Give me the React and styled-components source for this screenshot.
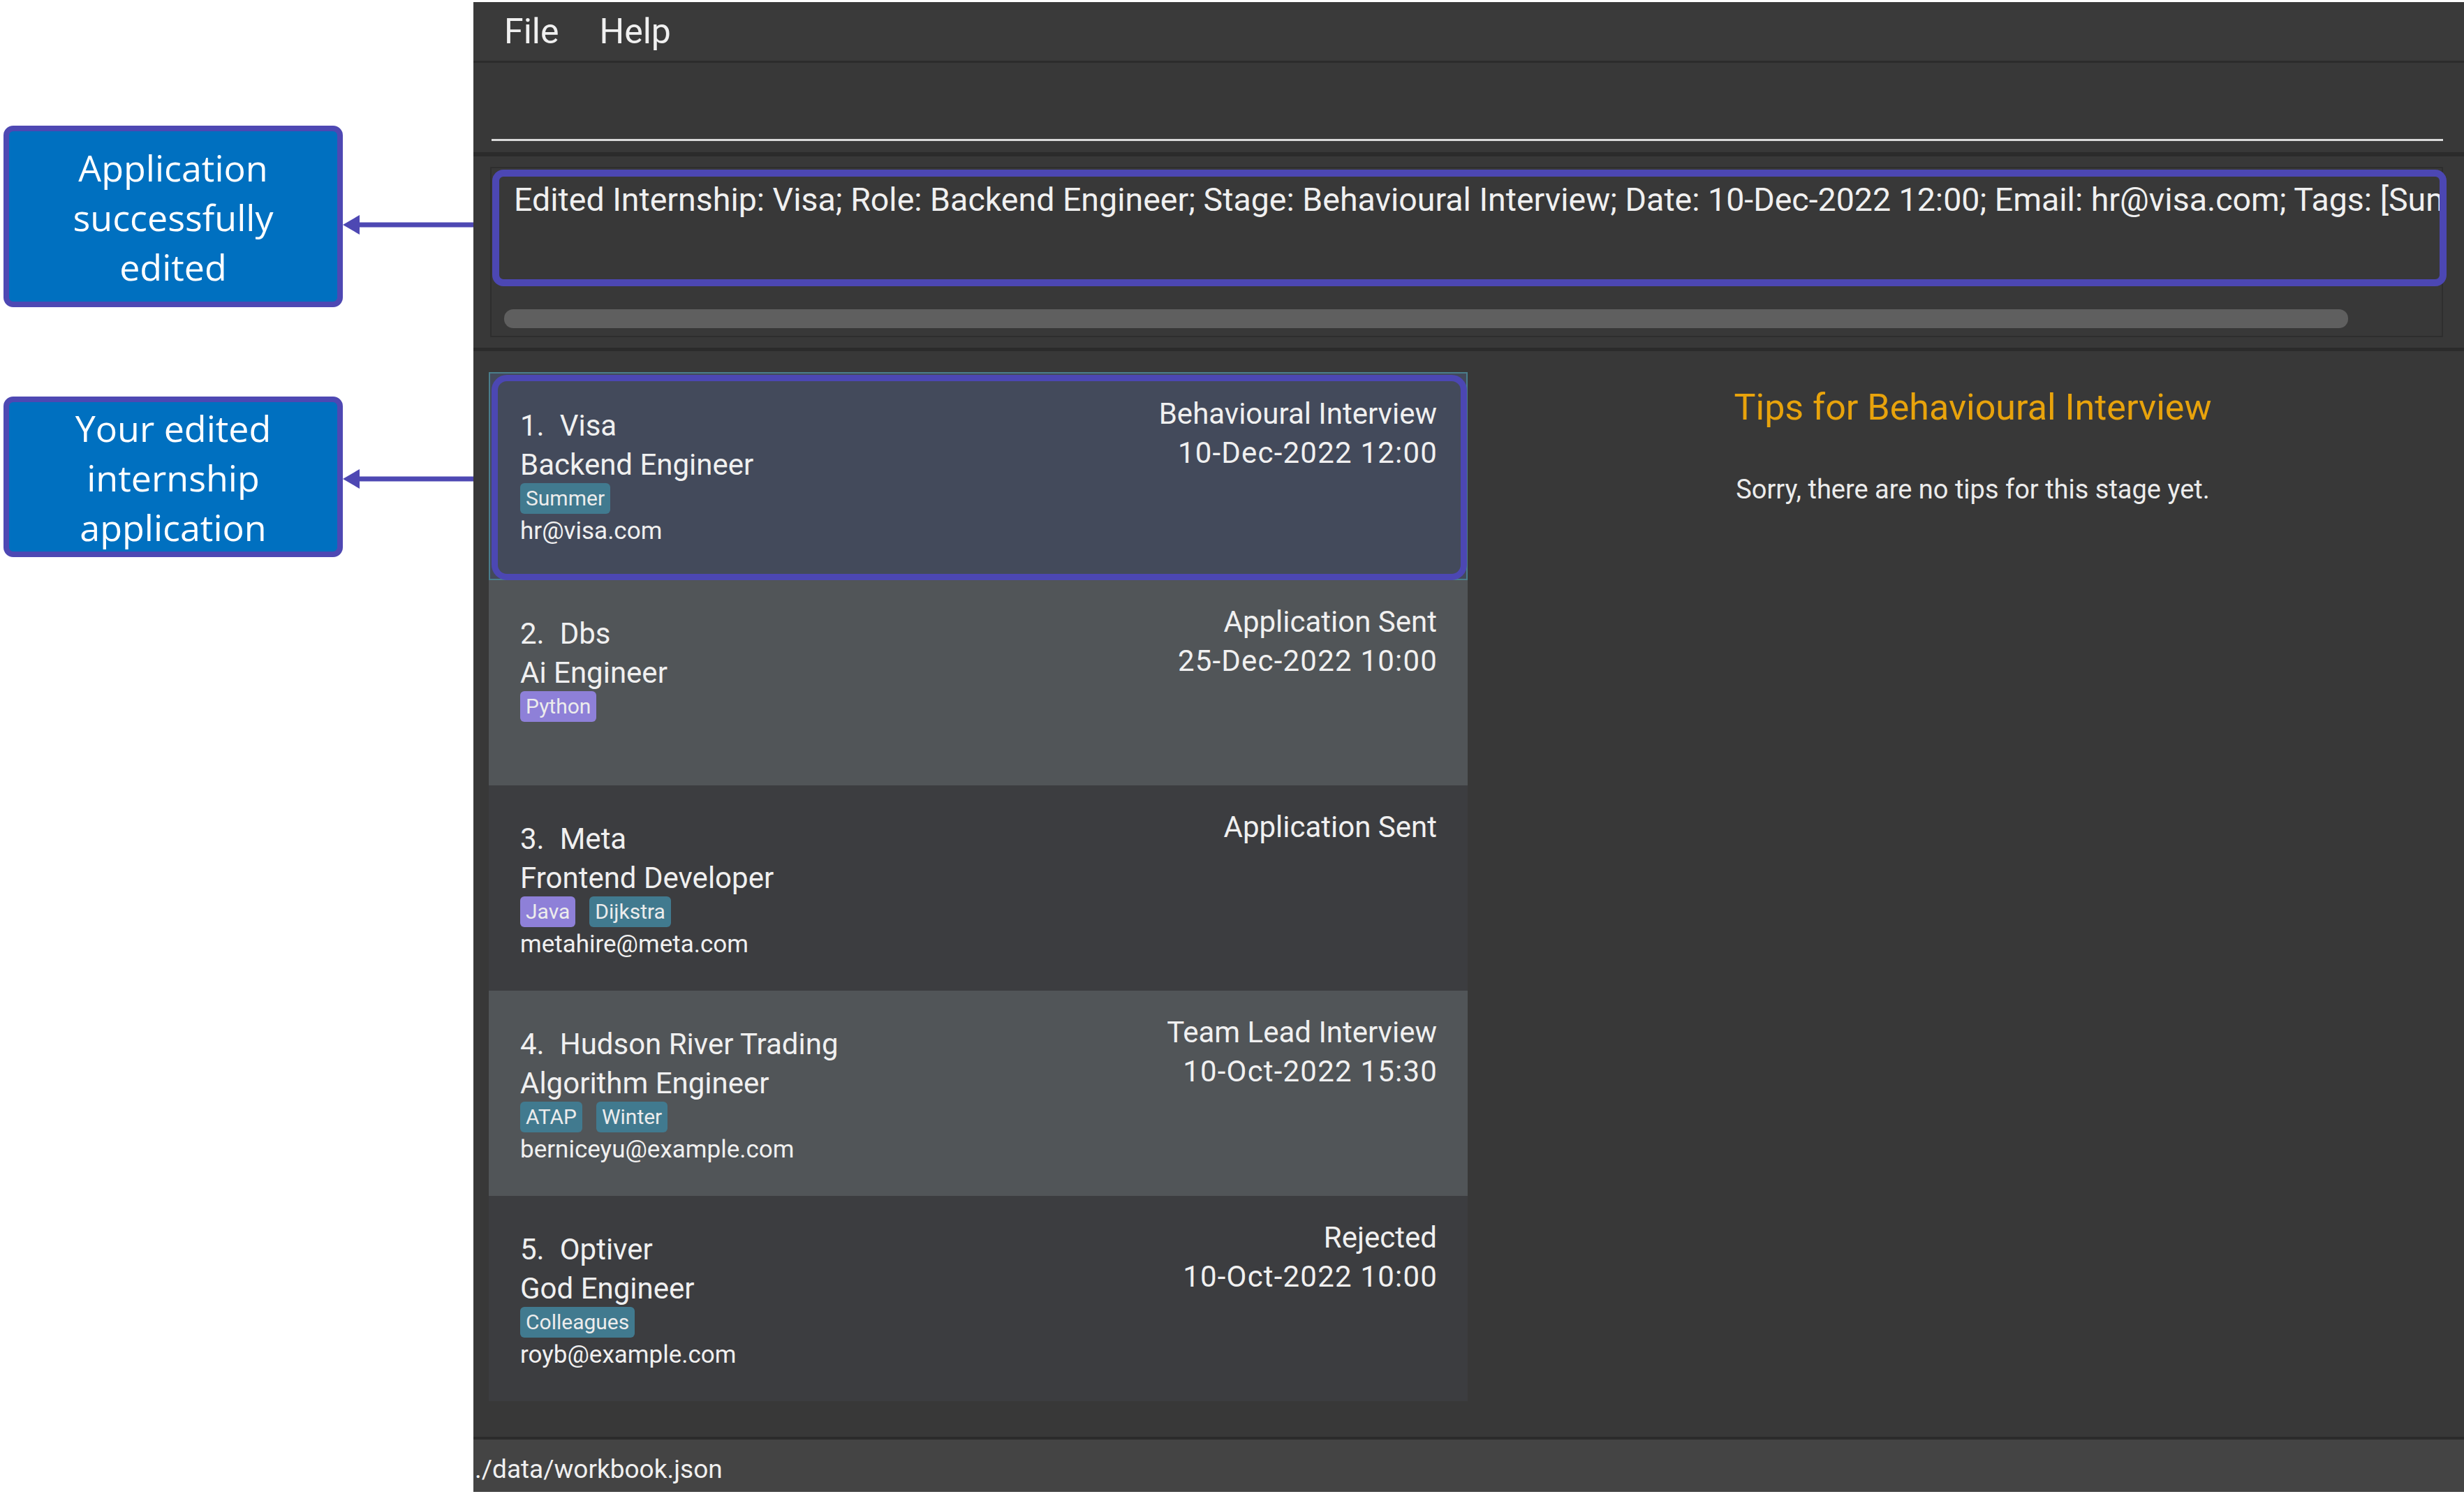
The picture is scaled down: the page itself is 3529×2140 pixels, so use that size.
import React from 'react'
import styled, { createGlobalStyle } from 'styled-components'

const GlobalStyle = createGlobalStyle`
  html, body {
    margin: 0;
    padding: 0;
    background: #ffffff;
  }
  * {
    box-sizing: border-box;
  }
`

const Page = styled.div`
  display: flex;
  width: 3529px;
  height: 2140px;
  background: #ffffff;
  overflow: hidden;
`

const Notes = styled.div`
  width: 678px;
  flex-shrink: 0;
  display: flex;
  flex-direction: column;
  padding: 180px 0 0 5px;
`

const NoteRow = styled.div`
  display: flex;
  align-items: flex-start;
  height: ${(p) => p.$height}px;
  margin-top: ${(p) => p.$gap || 0}px;
`

const NoteBox = styled.div`
  width: 486px;
  height: 100%;
  flex-shrink: 0;
  display: flex;
  align-items: center;
  justify-content: center;
  background: #0070c0;
  border: 8px solid #4e48b3;
  border-radius: 14px;
  color: #ffffff;
  font-family: 'Open Sans', 'Noto Sans', sans-serif;
  font-size: 52px;
  line-height: 71px;
  text-align: center;
`

const ArrowSvg = styled.svg`
  flex: 1;
  height: 30px;
  margin-top: ${(p) => p.$offset}px;
`

const Arrow = ({ offset }) => (
  <ArrowSvg $offset={offset} viewBox="0 0 187 30" preserveAspectRatio="none">
    <line x1="20" y1="15" x2="187" y2="15" stroke="#4e48b3" strokeWidth="7" />
    <polygon points="0,15 24,1 24,29" fill="#4e48b3" />
  </ArrowSvg>
)

const Window = styled.div`
  flex: 1;
  min-width: 0;
  margin: 3px 0;
  display: flex;
  flex-direction: column;
  background: #383838;
  font-family: Roboto, 'Liberation Sans', sans-serif;
  color: #f0f0f0;
`

const MenuBar = styled.div`
  height: 87px;
  display: flex;
  gap: 58px;
  padding-left: 44px;
  background: #3a3a3a;
  border-bottom: 3px solid #2c2c2c;
  font-size: 50px;
  line-height: 84px;
`

const CommandArea = styled.div`
  height: 128px;
  padding: 0 30px 0 26px;
  background: #383838;
`

const CommandField = styled.div`
  height: 112px;
  border-bottom: 3px solid #d9d9d9;
`

const Divider = styled.div`
  height: ${(p) => p.$h}px;
  background: #2b2b2b;
  flex-shrink: 0;
`

const ResultArea = styled.div`
  height: 274px;
  min-width: 0;
  padding: 15px 30px 15px 24px;
  background: #383838;
`

const ResultBox = styled.div`
  height: 100%;
  min-width: 0;
  border: 2px solid #2e2e2e;
  padding: 2px 0 0 1px;
  display: flex;
  flex-direction: column;
`

const ResultText = styled.div`
  height: 167px;
  margin-right: -7px;
  border: 10px solid #4c47b3;
  border-radius: 16px;
  padding: 6px 0 0 21px;
  overflow: hidden;
  white-space: nowrap;
  font-size: 46.5px;
  line-height: 1.2;
`

const Scrollbar = styled.div`
  margin: 33px 0 0 17px;
  width: 2641px;
  height: 27px;
  border-radius: 13px;
  background: #5f5f5f;
`

const Main = styled.div`
  flex: 1;
  display: flex;
  background: #383838;
`

const List = styled.div`
  width: 1424px;
  flex-shrink: 0;
  padding: 30px 0 0 22px;
  display: flex;
  flex-direction: column;
`

const Card = styled.div`
  position: relative;
  height: ${(p) => (p.$selected ? 298 : 294)}px;
  display: flex;
  justify-content: space-between;
  padding: 0 44px 0 45px;
  background: ${(p) => (p.$selected ? '#434a5b' : p.$alt ? '#515558' : '#3c3d40')};
  box-shadow: ${(p) => (p.$selected ? 'inset 0 0 0 2px #4a7d8c' : 'none')};

  &::after {
    content: '';
    display: ${(p) => (p.$selected ? 'block' : 'none')};
    position: absolute;
    inset: 4px 1px 0 4px;
    border: 9px solid #4c47b3;
    border-radius: 22px;
    pointer-events: none;
  }
`

const Left = styled.div`
  padding-top: 49px;
  display: flex;
  flex-direction: column;
`

const Right = styled.div`
  padding-top: 32px;
  text-align: right;
  font-size: 42px;
  line-height: 56px;
`

const DateLine = styled.div`
  letter-spacing: 1.2px;
  margin-right: -1px;
`

const Line = styled.div`
  font-size: 42px;
  line-height: 56px;
  white-space: nowrap;
`

const Index = styled.span`
  margin-right: 22px;
`

const Tags = styled.div`
  display: flex;
  gap: 20px;
  margin-top: -2px;
`

const Tag = styled.span`
  height: 44px;
  padding: 0 8px;
  border-radius: 6px;
  background: ${(p) => (p.$purple ? '#8e80d8' : '#417a8f')};
  color: #ececec;
  font-size: 30px;
  line-height: 44px;
`

const Email = styled.div`
  margin-top: 3px;
  font-size: 35px;
  line-height: 44px;
`

const Tips = styled.div`
  flex: 1;
  padding: 50px 0 0 20px;
  display: flex;
  flex-direction: column;
  align-items: center;
`

const TipsTitle = styled.div`
  font-size: 52px;
  line-height: 1.2;
  color: #e8a30c;
`

const TipsBody = styled.div`
  margin-top: 64px;
  font-size: 38px;
  line-height: 1.2;
  color: #ececec;
`

const StatusBar = styled.div`
  height: 75px;
  padding: 22px 0 0 2px;
  background: #444444;
  font-size: 37px;
  line-height: 42px;
`

const internships = [
  {
    company: 'Visa',
    role: 'Backend Engineer',
    tags: [{ name: 'Summer' }],
    email: 'hr@visa.com',
    stage: 'Behavioural Interview',
    date: '10-Dec-2022 12:00',
  },
  {
    company: 'Dbs',
    role: 'Ai Engineer',
    tags: [{ name: 'Python', purple: true }],
    stage: 'Application Sent',
    date: '25-Dec-2022 10:00',
  },
  {
    company: 'Meta',
    role: 'Frontend Developer',
    tags: [{ name: 'Java', purple: true }, { name: 'Dijkstra' }],
    email: 'metahire@meta.com',
    stage: 'Application Sent',
  },
  {
    company: 'Hudson River Trading',
    role: 'Algorithm Engineer',
    tags: [{ name: 'ATAP' }, { name: 'Winter' }],
    email: 'berniceyu@example.com',
    stage: 'Team Lead Interview',
    date: '10-Oct-2022 15:30',
  },
  {
    company: 'Optiver',
    role: 'God Engineer',
    tags: [{ name: 'Colleagues' }],
    email: 'royb@example.com',
    stage: 'Rejected',
    date: '10-Oct-2022 10:00',
  },
]

function InternshipCard({ item, index }) {
  return (
    <Card $selected={index === 0} $alt={index % 2 === 1}>
      <Left>
        <Line>
          <Index>{index + 1}.</Index>
          {item.company}
        </Line>
        <Line>{item.role}</Line>
        <Tags>
          {item.tags.map((t) => (
            <Tag key={t.name} $purple={t.purple}>
              {t.name}
            </Tag>
          ))}
        </Tags>
        {item.email && <Email>{item.email}</Email>}
      </Left>
      <Right>
        <div>{item.stage}</div>
        {item.date && <DateLine>{item.date}</DateLine>}
      </Right>
    </Card>
  )
}

function App() {
  return (
    <Page>
      <GlobalStyle />
      <Notes>
        <NoteRow $height={260}>
          <NoteBox>
            Application
            <br />
            successfully
            <br />
            edited
          </NoteBox>
          <Arrow offset={127} />
        </NoteRow>
        <NoteRow $height={230} $gap={128}>
          <NoteBox>
            Your edited
            <br />
            internship
            <br />
            application
          </NoteBox>
          <Arrow offset={103} />
        </NoteRow>
      </Notes>
      <Window>
        <MenuBar>
          <span>File</span>
          <span>Help</span>
        </MenuBar>
        <CommandArea>
          <CommandField />
        </CommandArea>
        <Divider $h={6} />
        <ResultArea>
          <ResultBox>
            <ResultText>
              Edited Internship: Visa; Role: Backend Engineer; Stage: Behavioural Interview; Date:
              10-Dec-2022 12:00; Email: hr@visa.com; Tags: [Summer]
            </ResultText>
            <Scrollbar />
          </ResultBox>
        </ResultArea>
        <Divider $h={5} />
        <Main>
          <List>
            {internships.map((item, i) => (
              <InternshipCard key={item.company} item={item} index={i} />
            ))}
          </List>
          <Tips>
            <TipsTitle>Tips for Behavioural Interview</TipsTitle>
            <TipsBody>Sorry, there are no tips for this stage yet.</TipsBody>
          </Tips>
        </Main>
        <Divider $h={4} />
        <StatusBar>./data/workbook.json</StatusBar>
      </Window>
    </Page>
  )
}

export default App
